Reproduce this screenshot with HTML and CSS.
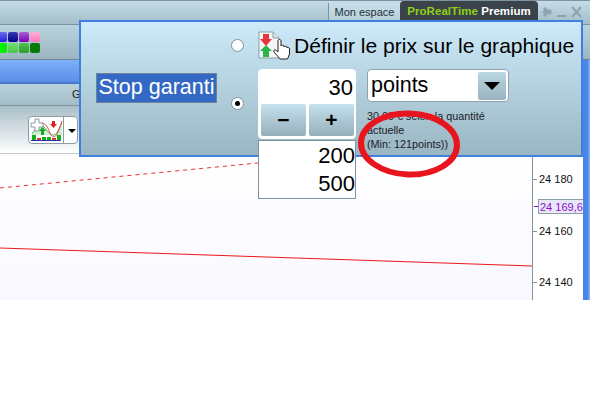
FILE: index.html
```html
<!DOCTYPE html>
<html lang="fr">
<head>
<meta charset="utf-8">
<title>Stop garanti</title>
<link rel="stylesheet" href="styles.css">
</head>
<body>
<div class="app">
  <header class="topbar">
    <div class="tabs">
      <span class="tab-light">Mon espace</span>
      <span class="tab-dark"><b class="green">ProRealTime</b> <b>Premium</b></span>
      <svg class="winicons" width="46" height="14" viewBox="0 0 46 14">
        <path d="M3 7h3M6 3h2v8H6zM8 5h5v4H8z" fill="#8fa3ad" stroke="#8fa3ad"/>
        <path d="M19 11h9" stroke="#8fa3ad" stroke-width="2"/>
        <path d="M34 2l9 10M43 2l-9 10" stroke="#8fa3ad" stroke-width="2"/>
      </svg>
    </div>
  </header>
  <div class="palette">
    <div class="swatches">
      <i class="sw s1"></i><i class="sw s2"></i><i class="sw s3"></i><i class="sw s4"></i>
      <i class="sw s5"></i><i class="sw s6"></i><i class="sw s7"></i><i class="sw s8"></i>
    </div>
  </div>
  <div class="bluebar"></div>
  <div class="menurow"><span>G</span></div>
  <div class="toolrow">
    <div class="toolbtn">
      <svg width="34" height="26" viewBox="0 0 34 26">
        <path d="M3 17C8 9 11 6 15 10s6 9 10 8 5-8 8-12v12H3z" fill="#d4ecd0"/>
        <path d="M3 17C8 9 11 6 15 10s6 9 10 8 5-8 8-12" fill="none" stroke="#4cb85a"/>
        <path d="M12 6c5 0 7 5 9 10s5 5 7 1 3-7 5-13" fill="none" stroke="#d84a4a"/>
        <path d="M6 2h4v4h4v4h-4v4H6v-4H2V6h4z" fill="#fff" stroke="#8a9aa3"/>
        <path d="M12 18v-4h-2l3.500-4 3.500 4h-2v4z" fill="#12a82a"/>
        <path d="M23 4v3h-2l3.500 4 3.500-4h-2V4z" fill="#e02020"/>
        <path d="M3 18h4v5H3zM13 20h4v3h-4zM18 20h4v3h-4zM28 18h4v5h-4z" fill="#12b012"/>
        <path d="M8 21h4v2H8zM23 21h4v2h-4z" fill="#d83a3a"/>
        <path d="M2 23.500h30" stroke="#2030c0"/>
      </svg>
      <span class="toolcaret"></span>
    </div>
  </div>
  <main class="chart">
    <svg class="lines" width="532" height="146" viewBox="0 0 532 146">
      <path d="M0 34L258 9" stroke="#f03030" stroke-dasharray="4 4" fill="none"/>
      <path d="M0 94L532 112" stroke="#f01818" fill="none"/>
    </svg>
    <div class="axis">
      <span class="price p1">24 180</span>
      <span class="price current">24 169,6</span>
      <span class="price p3">24 160</span>
      <span class="price p4">24 140</span>
    </div>
  </main>
  <div class="edge"></div>
</div>

<section class="panel">
  <div class="label-col"><span class="selected">Stop garanti</span></div>
  <div class="options">
    <div class="opt-top">
      <span class="radio"></span>
      <svg class="hand" width="34" height="30" viewBox="0 0 34 30">
        <path d="M1 1h14l6 6v20H1z" fill="#f4f6f6" stroke="#8c9ca5"/>
        <path d="M15 1v6h6" fill="#dfe6e8" stroke="#8c9ca5"/>
        <path d="M5 3h6v5h3l-6 7-6-7h3z" fill="#e8343c"/>
        <path d="M8 14l6 6h-3v6H5v-6H2z" fill="#2cb34a"/>
        <path d="M22 28l-6-7c-1-2 1-3 3-1l1 1V10c0-2 3-2 3 0v5c0-1 3-1 3 0v1c0-1 3-1 3 0v1c0-1 2.500-1 2.500 1v5l-2 5z" fill="#fff" stroke="#222"/>
      </svg>
      <span class="opt-text">Définir le prix sur le graphique</span>
    </div>
    <div class="opt-main">
      <span class="radio on"></span>
      <div class="spinner">
        <div class="value">30</div>
        <div class="steps">
          <button class="step">−</button>
          <button class="step">+</button>
        </div>
        <div class="list">
          <div>200</div>
          <div>500</div>
        </div>
      </div>
      <div class="unit">
        <div class="select"><span>points</span><span class="arrowbtn"></span></div>
        <p class="hint">30,00 € selon la quantité actuelle<br>(Min: 121points))</p>
      </div>
    </div>
  </div>
</section>

<svg class="circle" width="110" height="76" viewBox="0 0 110 76">
  <ellipse cx="55" cy="38" rx="48" ry="30.500" fill="none" stroke="#e8141e" stroke-width="6" transform="rotate(2 55 38)"/>
</svg>
</body>
</html>
```
FILE: styles.css
```css
* { box-sizing: border-box; }
html, body { margin: 0; padding: 0; background: #fff; }
body { position: relative; width: 590px; height: 410px; overflow: hidden; font-family: "Liberation Sans", Arial, sans-serif; }

.app { position: relative; width: 590px; height: 300px; display: flex; flex-direction: column; overflow: hidden; }

.topbar { height: 25px; flex: none; background: linear-gradient(#c4dde8, #a3bcc7); border-top: 1px solid #7d939e; border-bottom: 1px solid #7d939e; }
.tabs { display: flex; justify-content: flex-end; align-items: flex-start; height: 100%; padding-right: 6px; }
.tab-light { width: 72px; height: 19px; margin-top: 2px; border-left: 1px solid #7d939e; background: linear-gradient(#c9e0ea, #b3cdd8); font-size: 11px; line-height: 19px; color: #243038; text-align: center; white-space: nowrap; }
.tab-dark { width: 138px; height: 20px; background: #3a424a; border-radius: 4px 4px 0 0; color: #fff; font-size: 11.5px; line-height: 21px; text-align: center; white-space: nowrap; letter-spacing: 0.05px; }
.green { color: #8fd018; }
.winicons { margin-top: 4px; flex: none; }

.palette { height: 35px; flex: none; background: linear-gradient(#b9d4df, #9cb5c0); border-bottom: 1px solid #6e8794; padding-top: 7px; }
.swatches { display: grid; grid-template-columns: repeat(4, 10px); gap: 1px; margin-left: -3px; }
.sw { display: block; height: 10px; border-radius: 2px; }
.s1 { background: linear-gradient(#6a6af0, #2222dd); }
.s2 { background: linear-gradient(#3a3ab0, #000090); }
.s3 { background: linear-gradient(#a860d0, #7a00b8); }
.s4 { background: linear-gradient(#ffb0d8, #ff78b8); }
.s5 { background: #00f000; }
.s6 { background: linear-gradient(#70e070, #48c848); }
.s7 { background: linear-gradient(#50c050, #28a028); }
.s8 { background: #087a08; }

.bluebar { height: 24px; flex: none; background: linear-gradient(#7fb0fa, #5a8ee8); border-bottom: 2px solid #4a78c8; }
.menurow { height: 22px; flex: none; background: linear-gradient(#b8d2dc, #a4bcc7); border-bottom: 1px solid #7d939e; padding-left: 72px; font-size: 11px; line-height: 20px; color: #222; }

.toolrow { height: 48px; flex: none; background: linear-gradient(#a9bec8, #fff); padding: 10px 0 0 28px; border-bottom: 1px solid #c0ccd2; }
.toolbtn { display: flex; width: 50px; height: 28px; border: 1px solid #8a9ca6; border-radius: 4px; background: #fff; }
.toolbtn svg { flex: none; }
.toolcaret { flex: 1; border-left: 1px solid #8a9ca6; position: relative; }
.toolcaret::after { content: ""; position: absolute; left: 4px; top: 12px; border: 4px solid transparent; border-top: 4px solid #000; border-bottom: 0; }

.chart { flex: 1; display: flex; background: linear-gradient(#fff, #f8f8ff); }
.lines { flex: none; display: block; }
.axis { width: 51px; flex: none; border-left: 1px solid #7d939e; background: #fff; position: relative; }
.edge { position: absolute; right: 0; top: 60px; bottom: 0; width: 7px; background: linear-gradient(90deg, #4a86e8 60%, #8ab8f8); }
.price { position: absolute; left: 6px; font-size: 11px; line-height: 13px; color: #111; white-space: nowrap; }
.price::before { content: ""; position: absolute; left: -6px; top: 6px; width: 4px; height: 1px; background: #7d939e; }
.p1 { top: 19px; }
.p3 { top: 71px; }
.p4 { top: 122px; }
.current { top: 45px; left: 5px; padding: 0 1px; height: 15px; line-height: 14px; width: 46px; background: #e8e8f8; border: 1px solid #8a9ca6; color: #8a10c8; }
.current::before { left: -5px; background: #8a10c8; }

.panel { position: absolute; left: 79px; top: 20px; width: 504px; height: 137px; display: flex; border: 2px solid #3f7fe0; background: linear-gradient(#cdeafa, #9ab6c2); }
.label-col { width: 136px; flex: none; padding: 51px 0 0 15px; }
.selected { display: block; width: 121px; height: 30px; background: #3369c4; border: 1px solid #6c8494; color: #fff; font-size: 21.500px; line-height: 26px; text-align: center; white-space: nowrap; }

.options { flex: 1; display: flex; flex-direction: column; }
.opt-top { display: flex; align-items: center; height: 47px; }
.radio { display: block; flex: none; width: 13px; height: 13px; border-radius: 50%; background: #fff; border: 1px solid #7d939e; position: relative; margin-left: 14px; }
.radio.on::after { content: ""; position: absolute; left: 3px; top: 3px; width: 5px; height: 5px; border-radius: 50%; background: #000; }
.hand { flex: none; margin-left: 14px; }
.opt-text { font-size: 21.100px; margin-left: 2px; color: #000; white-space: nowrap; }

.opt-main { display: flex; align-items: flex-start; }
.opt-main .radio { margin-top: 28px; }
.spinner { width: 98px; height: 70px; margin-left: 14px; background: #fff; border: 1px solid #fff; border-radius: 4px; position: relative; flex: none; }
.value { height: 34px; font-size: 22px; line-height: 36px; text-align: right; padding-right: 2px; color: #000; }
.steps { display: flex; gap: 3px; padding: 0 1px 0 2px; }
.step { flex: 1; height: 32px; padding: 0; border: 0; border-radius: 2px; background: linear-gradient(#c4e1ee, #96b0bb); font: bold 21px "Liberation Sans", Arial, sans-serif; color: #000; }
.list { position: absolute; left: -1px; top: 70px; width: 98px; height: 59px; background: #fff; border: 1px solid #7d939e; text-align: right; font-size: 22px; line-height: 28px; padding-top: 1px; color: #000; }

.unit { width: 142px; margin-left: 11px; flex: none; }
.select { height: 33px; background: #fff; border: 1px solid #8da3ae; border-radius: 4px; display: flex; align-items: center; justify-content: space-between; padding: 0 2px 0 3px; font-size: 21.500px; color: #000; }
.arrowbtn { width: 28px; height: 28px; border-radius: 2px; background: linear-gradient(#b9d6e2, #9ab4bf); position: relative; }
.arrowbtn::after { content: ""; position: absolute; left: 6px; top: 10px; border: 8px solid transparent; border-top: 8px solid #000; border-bottom: 0; }
.hint { margin: 7px 0 0 0; font-size: 10.800px; line-height: 14px; color: #1a1a2a; width: 130px; }

.circle { position: absolute; left: 354px; top: 105.500px; }
```
